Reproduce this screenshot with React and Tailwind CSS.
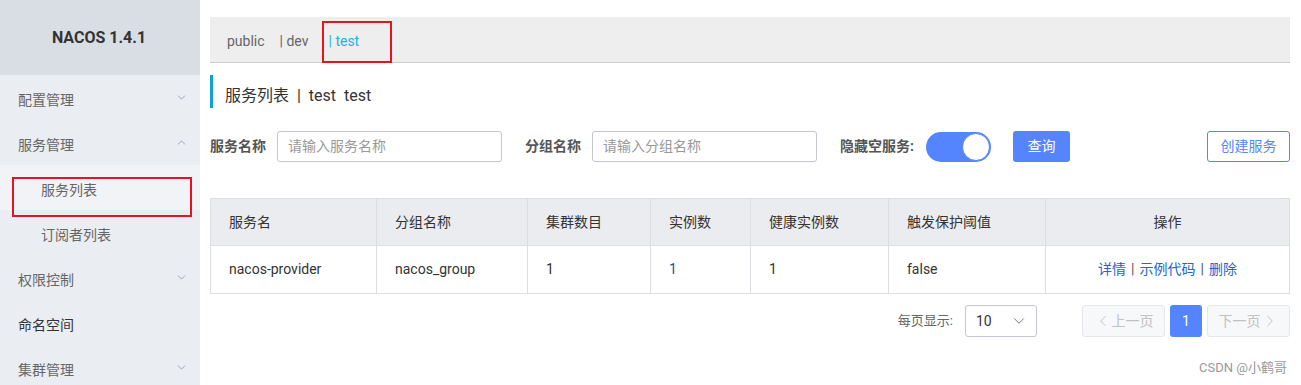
import React from "react";
import { ChevronDown, ChevronUp, ChevronLeft, ChevronRight } from "lucide-react";

const FONT = 'font-["Roboto","Noto_Sans_CJK_SC",sans-serif]';

function MenuItem({ label, icon, sub, active, dark, boxed }) {
  return (
    <div
      className={`relative shrink-0 h-[45px] flex items-center pt-[5px] text-[14px] ${
        active ? "bg-[#f2f3f7]" : ""
      } ${sub ? "pl-[41px]" : "pl-[18px]"} ${dark ? "text-[#333]" : "text-[#666]"}`}
    >
      <span>{label}</span>
      {icon === "down" && (
        <ChevronDown className="absolute left-[175px] top-[16px] text-[#8a8f99]" size={13} strokeWidth={1.4} />
      )}
      {icon === "up" && (
        <ChevronUp className="absolute left-[175px] top-[16px] text-[#8a8f99]" size={13} strokeWidth={1.4} />
      )}
      {boxed && (
        <div className="absolute left-[12px] top-[12px] w-[180px] h-[40px] border-2 border-[#e8131d]" />
      )}
    </div>
  );
}

export default function App() {
  const cols = [
    { w: "w-[166px]", h: "服务名", v: "nacos-provider" },
    { w: "w-[151px]", h: "分组名称", v: "nacos_group" },
    { w: "w-[123px]", h: "集群数目", v: "1" },
    { w: "w-[100px]", h: "实例数", v: "1", blue: true },
    { w: "w-[138px]", h: "健康实例数", v: "1" },
    { w: "w-[157px]", h: "触发保护阈值", v: "false" },
  ];
  return (
    <div className={`flex w-[1301px] h-[385px] overflow-hidden bg-white ${FONT}`}>
      <aside className="w-[200px] shrink-0 bg-[#eaedf1] flex flex-col overflow-hidden">
        <div className="shrink-0 h-[75px] bg-[#d9dee4] flex items-center justify-center text-[16px] font-bold text-[#333] pr-[2px]">
          NACOS 1.4.1
        </div>
        <MenuItem label="配置管理" icon="down" />
        <MenuItem label="服务管理" icon="up" />
        <MenuItem label="服务列表" sub active boxed />
        <MenuItem label="订阅者列表" sub />
        <MenuItem label="权限控制" icon="down" />
        <MenuItem label="命名空间" dark />
        <MenuItem label="集群管理" icon="down" />
      </aside>

      <main className="flex-1 pl-[10px] pr-[11px] pt-[17px] flex flex-col">
        <div className="h-[46px] bg-[#eeeeee] border-b border-[#cccccc] flex items-center pl-[17px] pt-[4px] text-[14px] text-[#666]">
          <span>public</span>
          <span className="ml-[15px]">|&nbsp;dev</span>
          <span className="relative ml-[20px] text-[#1bb4dc]">
            |&nbsp;test
            <span className="absolute left-[-6px] top-[-10px] w-[70px] h-[42px] border-2 border-[#e8131d]" />
          </span>
        </div>

        <div className="mt-[12px] h-[33px] border-l-[3px] border-[#109fd6] flex items-center pl-[12px] pt-[9px] text-[16px] text-[#333]">
          服务列表&nbsp;&nbsp;|&nbsp;&nbsp;test&nbsp;&nbsp;test
        </div>

        <div className="mt-[23px] h-[31px] flex items-center text-[14px] whitespace-nowrap">
          <span className="font-bold text-[#555] w-[67px]">服务名称</span>
          <div className="w-[225px] h-[31px] border border-[#c4c6cf] rounded-[3px] flex items-center pl-[10px] text-[#999]">
            请输入服务名称
          </div>
          <span className="font-bold text-[#555] ml-[23px] w-[67px]">分组名称</span>
          <div className="w-[225px] h-[31px] border border-[#c4c6cf] rounded-[3px] flex items-center pl-[10px] text-[#999]">
            请输入分组名称
          </div>
          <span className="font-bold text-[#555] ml-[23px] shrink-0">隐藏空服务:</span>
          <div className="ml-[12px] shrink-0 w-[65px] h-[30px] rounded-full bg-[#5584ff] flex items-center justify-end pr-[1px]">
            <div className="w-[28px] h-[28px] rounded-full bg-white border border-[#5584ff]" />
          </div>
          <div className="ml-[22px] shrink-0 w-[57px] h-[31px] rounded-[3px] bg-[#5584ff] text-white flex items-center justify-center">
            查询
          </div>
          <div className="ml-auto shrink-0 w-[83px] h-[31px] rounded-[3px] border border-[#5584ff] text-[#5584ff] flex items-center justify-center">
            创建服务
          </div>
        </div>

        <div className="mt-[36px] border border-[#dcdee3] text-[14px] text-[#333]">
          <div className="flex h-[47px] bg-[#ebecf0] border-b border-[#dcdee3]">
            {cols.map((c, i) => (
              <div key={i} className={`${c.w} shrink-0 border-r border-[#dcdee3] flex items-center pl-[18px]`}>
                {c.h}
              </div>
            ))}
            <div className="flex-1 flex items-center justify-center">操作</div>
          </div>
          <div className="flex h-[47px]">
            {cols.map((c, i) => (
              <div
                key={i}
                className={`${c.w} shrink-0 border-r border-[#dcdee3] flex items-center pl-[18px] ${
                  c.blue ? "text-[#1f4f9e]" : ""
                }`}
              >
                {c.v}
              </div>
            ))}
            <div className="flex-1 flex items-center justify-center text-[#2a63c9]">
              <span>详情</span>
              <span className="mx-[5px] text-[#555]">|</span>
              <span>示例代码</span>
              <span className="mx-[5px] text-[#555]">|</span>
              <span>删除</span>
            </div>
          </div>
        </div>

        <div className="mt-[11px] h-[32px] flex items-center justify-end text-[14px]">
          <span className="text-[#666] text-[13px]">每页显示:</span>
          <div className="ml-[12px] w-[72px] h-[32px] border border-[#c4c6cf] rounded-[3px] flex items-center pl-[10px] pr-[8px] text-[#333]">
            <span>10</span>
            <ChevronDown className="ml-auto text-[#666]" size={18} strokeWidth={1.2} />
          </div>
          <div className="ml-[45px] w-[83px] h-[32px] border border-[#e6e7eb] bg-[#f7f8fa] rounded-[3px] flex items-center justify-center text-[#c1c1c1]">
            <ChevronLeft size={18} strokeWidth={1.3} />
            <span>上一页</span>
          </div>
          <div className="ml-[5px] w-[32px] h-[32px] rounded-[3px] bg-[#5584ff] text-white flex items-center justify-center">
            1
          </div>
          <div className="ml-[5px] w-[83px] h-[32px] border border-[#e6e7eb] bg-[#f7f8fa] rounded-[3px] flex items-center justify-center text-[#c1c1c1]">
            <span>下一页</span>
            <ChevronRight size={18} strokeWidth={1.3} />
          </div>
        </div>

        <div className="mt-[21px] flex justify-end pr-[3px] text-[13px] text-[#999]">CSDN @小鹤哥</div>
      </main>
    </div>
  );
}
